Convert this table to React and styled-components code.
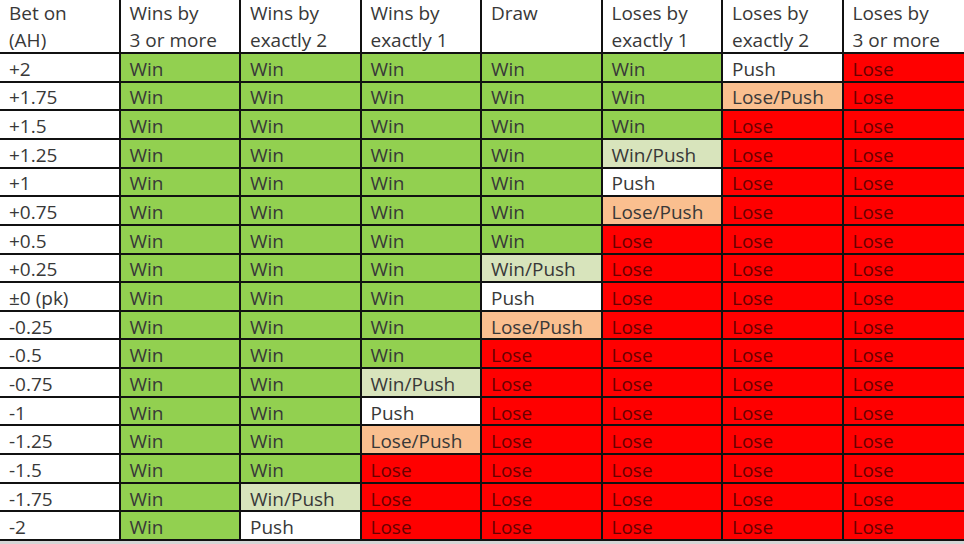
import React from "react"
import styled, { createGlobalStyle } from "styled-components"

const GlobalStyle = createGlobalStyle`
  html, body {
    margin: 0;
    padding: 0;
    background: #d6d6d6;
  }
  body {
    font-family: "Open Sans", "Liberation Sans", sans-serif;
  }
`

const Colors = {
  win: "#92d050",
  winPush: "#d8e4bc",
  push: "#ffffff",
  losePush: "#fabf8f",
  lose: "#ff0000",
}

const W = "Win"
const WP = "Win/Push"
const P = "Push"
const LP = "Lose/Push"
const L = "Lose"

const kindOf = {
  [W]: "win",
  [WP]: "winPush",
  [P]: "push",
  [LP]: "losePush",
  [L]: "lose",
}

const headers = [
  ["Bet on", "(AH)"],
  ["Wins by", "3 or more"],
  ["Wins by", "exactly 2"],
  ["Wins by", "exactly 1"],
  ["Draw"],
  ["Loses by", "exactly 1"],
  ["Loses by", "exactly 2"],
  ["Loses by", "3 or more"],
]

const rows = [
  ["+2", W, W, W, W, W, P, L],
  ["+1.75", W, W, W, W, W, LP, L],
  ["+1.5", W, W, W, W, W, L, L],
  ["+1.25", W, W, W, W, WP, L, L],
  ["+1", W, W, W, W, P, L, L],
  ["+0.75", W, W, W, W, LP, L, L],
  ["+0.5", W, W, W, W, L, L, L],
  ["+0.25", W, W, W, WP, L, L, L],
  ["±0 (pk)", W, W, W, P, L, L, L],
  ["-0.25", W, W, W, LP, L, L, L],
  ["-0.5", W, W, W, L, L, L, L],
  ["-0.75", W, W, WP, L, L, L, L],
  ["-1", W, W, P, L, L, L, L],
  ["-1.25", W, W, LP, L, L, L, L],
  ["-1.5", W, W, L, L, L, L, L],
  ["-1.75", W, WP, L, L, L, L, L],
  ["-2", W, P, L, L, L, L, L],
]

const Sheet = styled.div`
  display: grid;
  grid-template-columns: repeat(8, 1fr);
  grid-template-rows: 54px repeat(17, 1fr);
  width: 964px;
  height: 541px;
  background: #fff;
`

const HeadCell = styled.div`
  padding: 0 0 0 9px;
  font-size: 19px;
  line-height: 26.5px;
  color: #383838;
  border-bottom: 2px solid #111;
  border-right: ${props => (props.last ? "none" : "2px solid #111")};
  overflow: hidden;
  white-space: nowrap;
`

const Cell = styled.div`
  display: flex;
  align-items: center;
  padding: 3px 0 0 9px;
  font-size: 19px;
  color: ${props => (props.kind === "lose" ? "#6a0000" : "#383838")};
  background: ${props => Colors[props.kind] || "#fff"};
  border-bottom: 2px solid #111;
  border-right: ${props => (props.last ? "none" : "2px solid #111")};
  white-space: nowrap;
  overflow: hidden;
`

const App = () => {
  return (
    <>
      <GlobalStyle />
      <Sheet>
        {headers.map((lines, i) => (
          <HeadCell key={"h" + i} last={i === headers.length - 1}>
            {lines.map((line, j) => (
              <div key={j}>{line}</div>
            ))}
          </HeadCell>
        ))}
        {rows.map((row, r) =>
          row.map((value, c) => (
            <Cell
              key={r + "-" + c}
              kind={c === 0 ? null : kindOf[value]}
              last={c === row.length - 1}
            >
              {value}
            </Cell>
          ))
        )}
      </Sheet>
    </>
  )
}

export default App
